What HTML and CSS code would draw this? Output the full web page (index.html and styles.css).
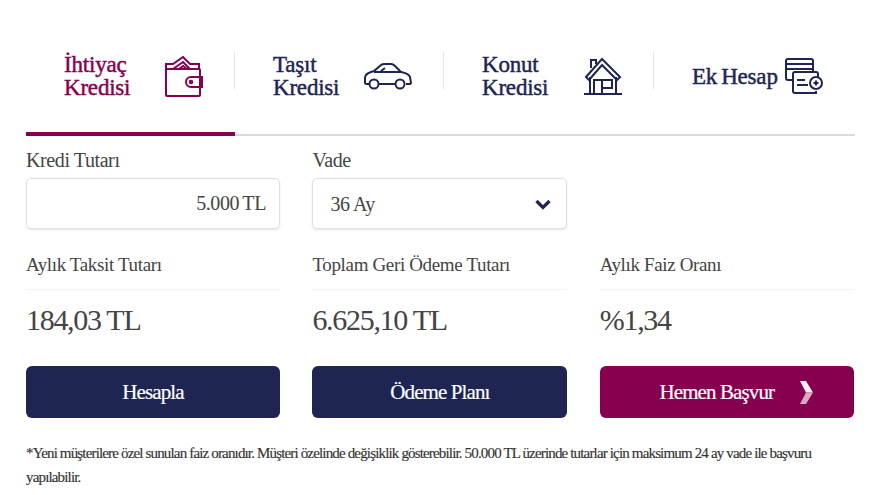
FILE: index.html
```html
<!DOCTYPE html>
<html lang="en">
<head>
    <meta charset="UTF-8">
    <title>Kredi Hesaplama</title>
    <link rel="stylesheet" href="styles.css">
</head>
<body>
    <nav class="tabs">
        <a class="tab active" href="#">
            <span class="tab-text">İhtiyaç<br>Kredisi</span>
            <svg class="tab-icon" width="38" height="41" viewBox="0 0 38 41" fill="none" stroke="currentColor" stroke-width="2">
                <path d="M1 13h33a1 1 0 0 1 1 1v25a1 1 0 0 1-1 1H2a1 1 0 0 1-1-1z"/>
                <path d="M1 13V8h7l10-7 7 7h9v5"/>
                <path d="M8 13l10-7 7 7M14 13l4-3 4 3"/>
                <path d="M37 21H26a5 5 0 0 0 0 10h11z"/>
                <circle cx="26" cy="26" r="1.300"/>
            </svg>
        </a>
        <a class="tab" href="#">
            <span class="tab-text">Taşıt<br>Kredisi</span>
            <svg class="tab-icon icon-car" width="48" height="27" viewBox="0 0 48 27" fill="none" stroke="currentColor" stroke-width="2">
                <path d="M5 21H2.500A1.500 1.500 0 0 1 1 19.500V15c0-3 3-5 6-6l3-1 7-6c1-1 3-1 4-1h6c2 0 3 1 4 2l6 6c5 1 8 2 9 5l1 6-1 1h-4"/>
                <path d="M15 21h16M10 9h28M17 8l4-3"/>
                <circle cx="10" cy="21" r="4.500"/>
                <circle cx="36" cy="21" r="4.500"/>
            </svg>
        </a>
        <a class="tab" href="#">
            <span class="tab-text">Konut<br>Kredisi</span>
            <svg class="tab-icon" width="38" height="38" viewBox="0 0 38 38" fill="none" stroke="currentColor" stroke-width="2">
                <path d="M2 20L18 2l18 18-3 3L18 8 5 23z"/>
                <path d="M6 20v17M32 20v17M0 37h38"/>
                <path d="M7 11V3h5v4"/>
                <path d="M10 37V23h8v14M18 23h10v8H18"/>
            </svg>
        </a>
        <a class="tab" href="#">
            <span class="tab-text">Ek Hesap</span>
            <svg class="tab-icon" width="38" height="36" viewBox="0 0 38 36" fill="none" stroke="currentColor" stroke-width="2">
                <path d="M7 22H3a2 2 0 0 1-2-2V3a2 2 0 0 1 2-2h23a2 2 0 0 1 2 2v10"/>
                <path d="M1 6h27M1 11h27"/>
                <path d="M10 14h21a2 2 0 0 1 2 2v3M31 33v2H10a2 2 0 0 1-2-2V16a2 2 0 0 1 2-2"/>
                <path d="M12 22h8M12 27h11"/>
                <circle cx="31" cy="25" r="6"/>
                <path d="M28.500 25h5M31 22.500v5"/>
            </svg>
        </a>
    </nav>

    <main class="calc">
        <div class="field">
            <label class="field-label">Kredi Tutarı</label>
            <div class="box box-amount">5.000 TL</div>
        </div>
        <div class="field">
            <label class="field-label">Vade</label>
            <div class="box box-select">
                <span>36 Ay</span>
                <svg width="16" height="11" viewBox="0 0 16 11" fill="none" stroke="#1e2553" stroke-width="3.200">
                    <path d="M1.500 2L8 8.500 14.500 2"/>
                </svg>
            </div>
        </div>
        <div class="field"></div>

        <div class="result">
            <div class="result-label">Aylık Taksit Tutarı</div>
            <div class="result-value">184,03 TL</div>
        </div>
        <div class="result">
            <div class="result-label">Toplam Geri Ödeme Tutarı</div>
            <div class="result-value">6.625,10 TL</div>
        </div>
        <div class="result">
            <div class="result-label">Aylık Faiz Oranı</div>
            <div class="result-value">%1,34</div>
        </div>

        <a class="btn" href="#">Hesapla</a>
        <a class="btn" href="#">Ödeme Planı</a>
        <a class="btn btn-apply" href="#">
            Hemen Başvur
            <svg class="btn-arrow" width="14" height="25" viewBox="0 0 14 25">
                <path d="M1 1h6l7 11.500H7z" fill="#fbeef5"/>
                <path d="M7 12.500h7L7 24H1z" fill="#dca6c6"/>
            </svg>
        </a>
    </main>

    <p class="note">*Yeni müşterilere özel sunulan faiz oranıdır. Müşteri özelinde değişiklik gösterebilir. 50.000 TL üzerinde tutarlar için maksimum 24 ay vade ile başvuru yapılabilir.</p>
</body>
</html>
```

FILE: styles.css
```css
body {
    font-family: "Liberation Serif", "DejaVu Serif", serif;
    margin: 0;
    padding: 0 25px 0 26px;
    background: #fff;
    color: #444;
    overflow: hidden;
}

a {
    color: inherit;
    text-decoration: none;
}

.tabs {
    display: grid;
    grid-template-columns: 209px 209px 210px 1fr;
    height: 136px;
    box-sizing: border-box;
    border-bottom: 2px solid #d8d8dc;
}

.tab {
    position: relative;
    display: flex;
    align-items: center;
    justify-content: space-between;
    height: 136px;
    box-sizing: border-box;
    padding: 52px 32px 36px 38px;
    color: #1e2553;
}

.tab::after {
    content: "";
    position: absolute;
    right: 0;
    top: 52px;
    height: 37px;
    width: 1px;
    background: #e4e4e6;
}

.tab:last-child::after {
    display: none;
}

.tab.active {
    color: #86004f;
    box-shadow: inset 0 -4px #86004f;
}

.tab-text {
    font-size: 23px;
    line-height: 23px;
    letter-spacing: -0.2px;
    word-spacing: -1.5px;
    -webkit-text-stroke: 0.45px currentColor;
    white-space: nowrap;
}

.calc {
    display: grid;
    grid-template-columns: 254px 255px 254px;
    column-gap: 32.4px;
}

.field-label {
    display: block;
    font-size: 20px;
    line-height: 24px;
    letter-spacing: -0.4px;
    margin: 12px 0 6px;
}

.box {
    height: 51px;
    box-sizing: border-box;
    border: 1px solid #e0e0e4;
    border-radius: 5px;
    box-shadow: 0 1px 2px #e2e2e6;
    font-size: 20px;
    letter-spacing: -0.4px;
    display: flex;
    align-items: center;
}

.box-amount {
    justify-content: flex-end;
    padding-right: 13px;
    word-spacing: -1px;
}

.box-select {
    justify-content: space-between;
    padding: 2px 15px 0 17px;
}

.result {
    margin-top: 22px;
}

.result-label {
    font-size: 19px;
    line-height: 28px;
    letter-spacing: -0.35px;
    padding-bottom: 10px;
    border-bottom: 1px solid #f2f2f4;
}

.result-value {
    font-size: 30px;
    line-height: 36px;
    letter-spacing: -1.3px;
    margin-top: 12px;
}

.btn {
    position: relative;
    display: flex;
    align-items: center;
    justify-content: center;
    height: 52px;
    margin-top: 28px;
    border-radius: 6px;
    background: #1e2553;
    color: #fff;
    font-size: 21px;
    letter-spacing: -0.9px;
    -webkit-text-stroke: 0.2px #fff;
}

.btn-apply {
    background: #86004f;
    padding-right: 20px;
    box-sizing: border-box;
}

.btn-arrow {
    position: absolute;
    left: 199px;
    top: 14px;
}

.note {
    margin: 23px 0 0;
    font-size: 15px;
    line-height: 24px;
    letter-spacing: -0.84px;
    color: #333;
    -webkit-text-stroke: 0.15px #333;
}
```
